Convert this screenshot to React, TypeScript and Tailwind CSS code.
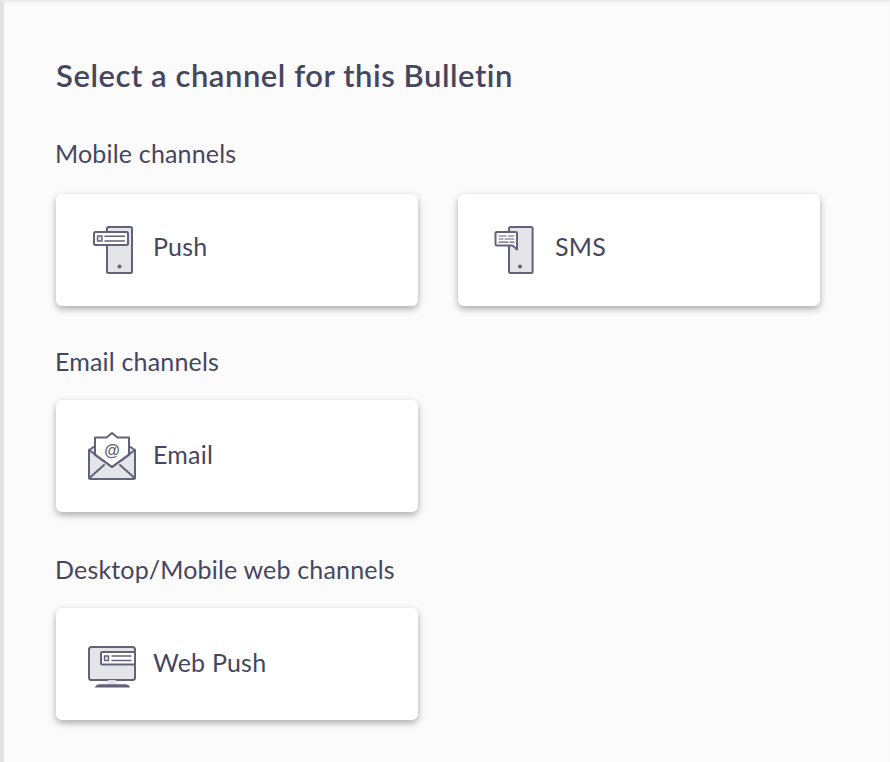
const stroke = "#62627a";
const fill = "#e4e4e9";

function PushIcon() {
  return (
    <svg width="48" height="48" viewBox="0 0 48 48" fill="none" stroke={stroke} strokeLinejoin="round" strokeLinecap="round">
      <rect x="19" y="1" width="25" height="46" rx="1.5" fill={fill} strokeWidth="2" />
      <rect x="6" y="6" width="34" height="13" rx="1.5" fill="#fff" strokeWidth="2" />
      <rect x="9.5" y="10" width="4.5" height="5" fill={fill} strokeWidth="1.4" />
      <path d="M17 10.2H36.5M17 15H36.5" strokeWidth="1.5" />
      <circle cx="31.5" cy="40.5" r="2" fill={stroke} stroke="none" />
    </svg>
  );
}

function SmsIcon() {
  return (
    <svg width="48" height="48" viewBox="0 0 48 48" fill="none" stroke={stroke} strokeLinejoin="round" strokeLinecap="round">
      <rect x="19" y="1" width="23.6" height="46" rx="1.5" fill={fill} strokeWidth="2" />
      <path d="M7 6H25.5A1.5 1.5 0 0 1 27 7.5V23.5L22.5 19.5H7A1.5 1.5 0 0 1 5.5 18V7.5A1.5 1.5 0 0 1 7 6Z" fill="#fff" strokeWidth="2" />
      <path d="M9 10H16M18.5 10H24M9 13H13M15 13H24M9 16.2H18M20 16.2H24" strokeWidth="1.2" />
      <circle cx="30" cy="40.5" r="2" fill={stroke} stroke="none" />
    </svg>
  );
}

function EmailIcon() {
  return (
    <svg width="48" height="48" viewBox="0 0 48 48" fill="none" stroke={stroke} strokeLinejoin="round" strokeLinecap="round">
      <path d="M1 18L24 3L47 18V45.5A1.5 1.5 0 0 1 45.5 47H2.5A1.5 1.5 0 0 1 1 45.5Z" fill={fill} strokeWidth="2" />
      <path d="M7 23V5.5H18.5L24 1L29.5 5.5H41V23L24 35Z" fill="#fff" strokeWidth="2" />
      <path d="M1 18L24 35L47 18" strokeWidth="2" />
      <path d="M2 45.5L16 33M46 45.5L32 33" strokeWidth="2" />
      <text x="24" y="23.5" textAnchor="middle" fontSize="16" fontWeight="700" fontFamily="'Liberation Sans', sans-serif" fill={stroke} stroke="none">@</text>
    </svg>
  );
}

function WebIcon() {
  return (
    <svg width="48" height="48" viewBox="0 0 48 48" fill="none" stroke={stroke} strokeLinejoin="round" strokeLinecap="round">
      <rect x="1" y="7" width="46" height="33" rx="2.5" fill={fill} strokeWidth="2" />
      <path d="M13 13.5A1.5 1.5 0 0 1 14.5 12H47V24.5H14.5A1.5 1.5 0 0 1 13 23Z" fill="#fff" strokeWidth="2" />
      <rect x="16.5" y="16" width="4" height="4.5" fill={fill} strokeWidth="1.4" />
      <path d="M24 16H43M24 20.6H43" strokeWidth="1.5" />
      <path d="M20 41L19 44.5H29L28 41Z" fill={fill} stroke={fill} strokeWidth="1" />
      <path d="M7 47.4C7.5 45.4 9.5 44.2 12 44.2H37C39.5 44.2 41.5 45.4 42 47.4Z" fill={stroke} stroke="none" />
    </svg>
  );
}

function Card({ icon, label, first }: { icon: React.ReactNode; label: string; first?: boolean }) {
  return (
    <div className="flex h-[112px] w-[362px] items-center gap-[17px] rounded-[6px] bg-white pl-[32px] shadow-[0_3px_7px_rgba(0,0,0,0.32)]">
      {icon}
      <span className={first ? "pb-[6px] text-[25px] tracking-[0.2px] text-[#46465f]" : "pb-[2px] text-[25px] tracking-[0.2px] text-[#46465f]"}>{label}</span>
    </div>
  );
}

export default function App() {
  return (
    <div
      className="h-[762px] w-[890px] overflow-hidden border-l-[4px] border-t-[2px] border-l-[#e3e3e3] border-t-[#ececec] bg-[#fbfbfb] pl-[52px] shadow-[inset_0_3px_3px_rgba(0,0,0,0.02)]"
      style={{ fontFamily: "Lato, 'Open Sans', sans-serif" }}
    >
      <h1 className="mt-[55px] h-[36px] text-[31px] leading-[36px] font-semibold tracking-[0.55px] text-[#46465f]">
        Select a channel for this Bulletin
      </h1>
      <p className="-ml-px mt-[44px] h-[32px] text-[25px] leading-[32px] tracking-[0.18px] text-[#46465f]">Mobile channels</p>
      <div className="mt-[25px] flex gap-[40px]">
        <Card icon={<PushIcon />} label="Push" first />
        <Card icon={<SmsIcon />} label="SMS" first />
      </div>
      <p className="-ml-px mt-[39px] h-[32px] text-[25px] leading-[32px] tracking-[0.18px] text-[#46465f]">Email channels</p>
      <div className="mt-[23px]">
        <Card icon={<EmailIcon />} label="Email" />
      </div>
      <p className="-ml-px mt-[41px] h-[32px] text-[25px] leading-[32px] tracking-[0.18px] text-[#46465f]">Desktop/Mobile web channels</p>
      <div className="mt-[23px]">
        <Card icon={<WebIcon />} label="Web Push" />
      </div>
    </div>
  );
}
